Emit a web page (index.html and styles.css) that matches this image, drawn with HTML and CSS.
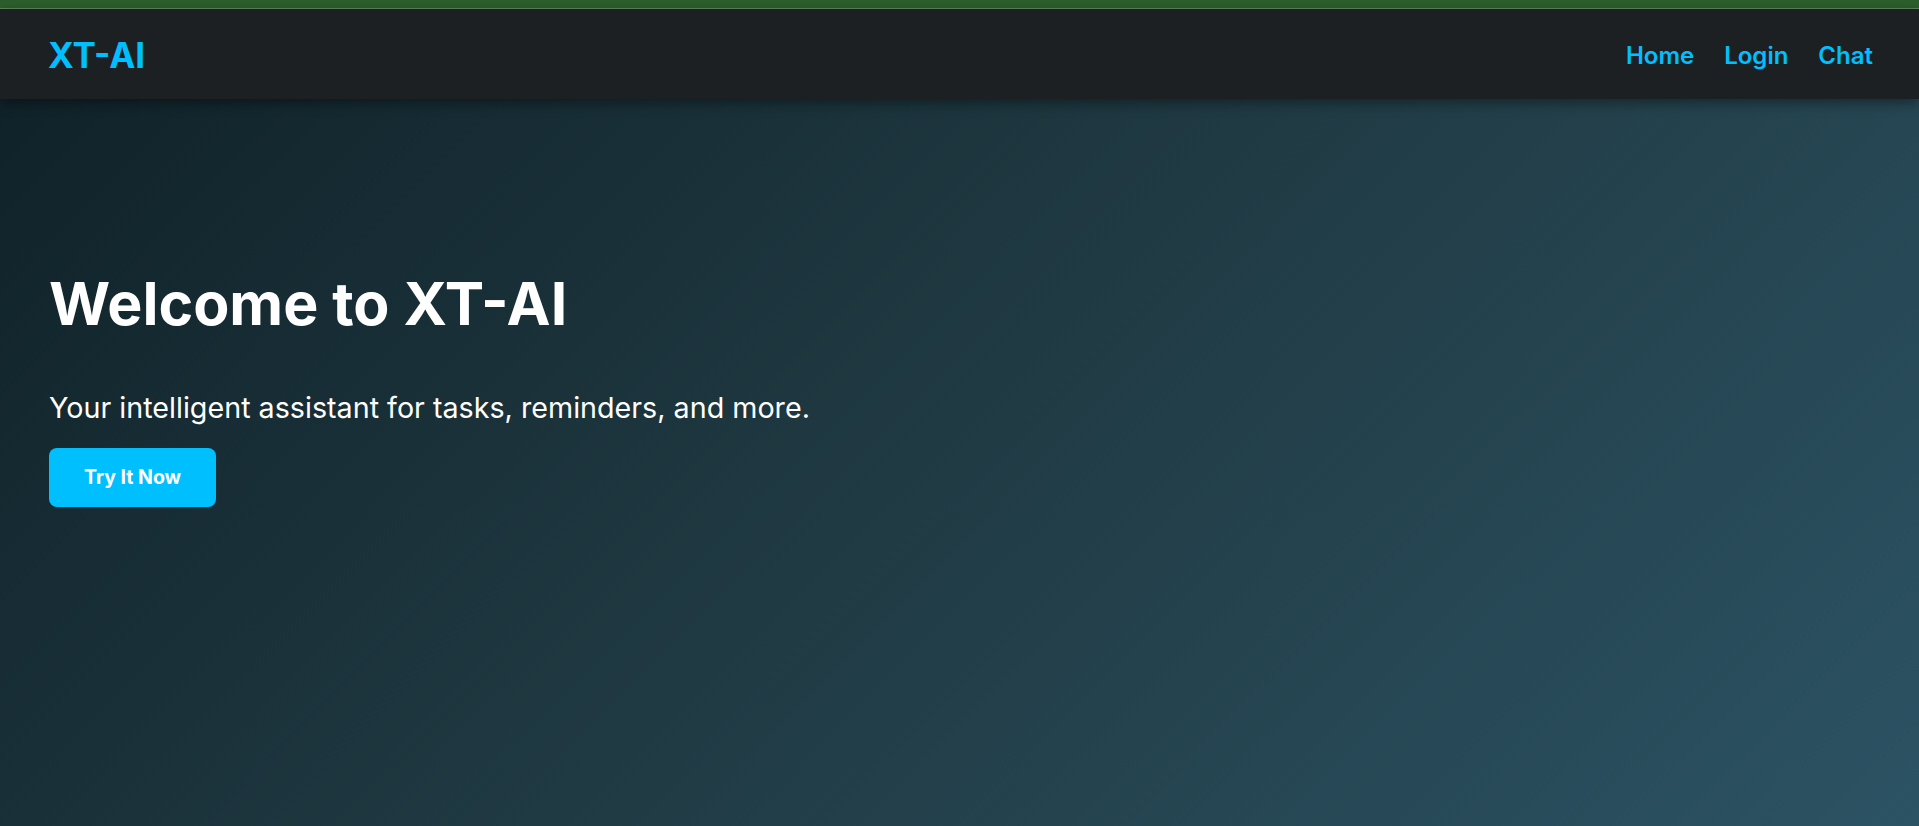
FILE: index.html
```html
<!DOCTYPE html>
<html lang="en">
<head>
<meta charset="utf-8">
<title>XT-AI</title>
<link rel="stylesheet" href="styles.css">
</head>
<body>
<div class="topbar"></div>
<header class="navbar">
  <a class="logo" href="#">XT-AI</a>
  <nav class="nav-links">
    <a href="#">Home</a>
    <a href="#">Login</a>
    <a href="#">Chat</a>
  </nav>
</header>
<main class="hero">
  <h1 class="hero-title">Welcome to XT-AI</h1>
  <p class="hero-sub">Your intelligent assistant for tasks, reminders, and more.</p>
  <a class="btn" href="#">Try It Now</a>
</main>
</body>
</html>
```
FILE: styles.css
```css
* { box-sizing: border-box; }
html, body { height: 100%; }
body {
  margin: 0;
  font-family: Inter, "Noto Sans", sans-serif;
  color: #fff;
  background: linear-gradient(135deg, #0f2027 0%, #203a43 50%, #2c5364 100%);
  background-attachment: fixed;
  min-height: 826px;
  overflow: hidden;
}
.topbar {
  height: 9px;
  background: #2c5e2d;
  border-bottom: 1px solid #5a8a5a;
}
.navbar {
  height: 90px;
  background: #1d2022;
  display: flex;
  align-items: center;
  justify-content: space-between;
  padding: 2px 46px 0 48px;
  box-shadow: 0 4px 12px rgba(0, 0, 0, 0.4);
  position: relative;
  z-index: 1;
}
.logo {
  color: #00bfff;
  font-size: 35px;
  font-weight: 700;
  text-decoration: none;
  line-height: 1;
}
.nav-links {
  display: flex;
  gap: 30px;
}
.nav-links a {
  color: #00bfff;
  font-size: 24px;
  font-weight: 600;
  text-decoration: none;
}
.hero {
  padding: 169px 49px 0;
}
.hero-title {
  margin: 0;
  font-size: 59px;
  line-height: 72px;
  font-weight: 700;
}
.hero-sub {
  margin: 50px 0 23px;
  font-size: 28.7px;
  line-height: 35px;
  font-weight: 400;
}
.btn {
  display: inline-block;
  background: #00bfff;
  color: #fff;
  font-size: 19.5px;
  font-weight: 700;
  line-height: 24px;
  padding: 17px 35px 18px;
  border-radius: 8px;
  text-decoration: none;
}
```
